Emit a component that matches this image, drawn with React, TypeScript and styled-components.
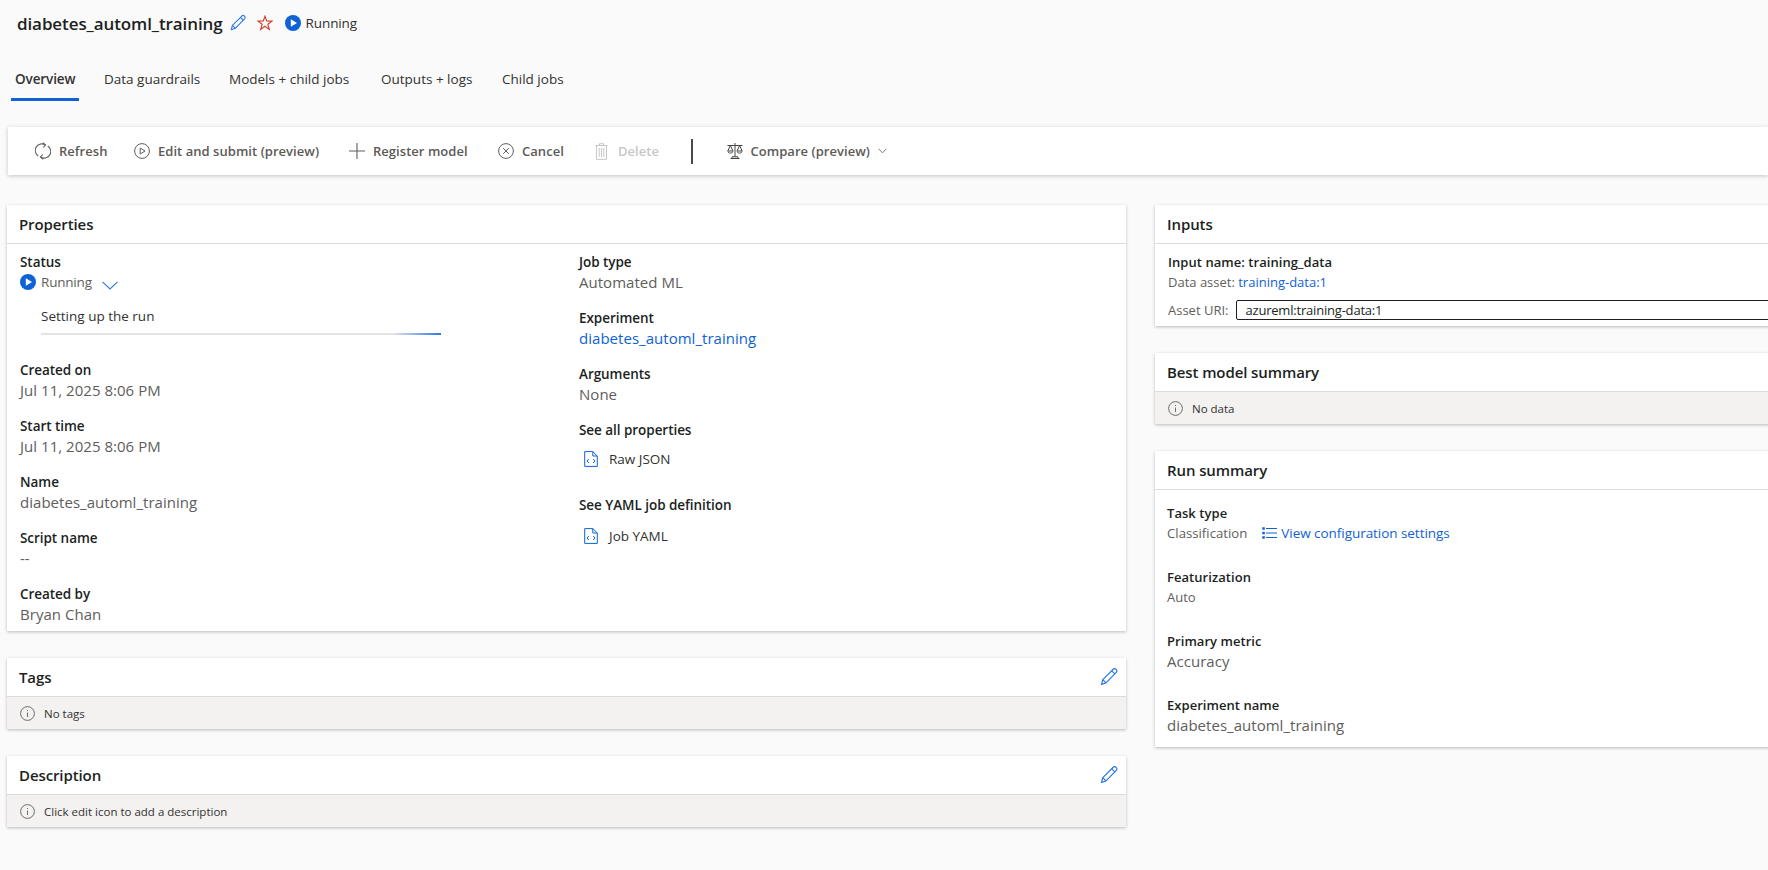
import React from "react";
import styled, { createGlobalStyle } from "styled-components";

const Global = createGlobalStyle`
  html, body { margin: 0; padding: 0; background: #fafafa; }
  body { font-family: "Open Sans", "Noto Sans", "Liberation Sans", sans-serif; }
  * { box-sizing: border-box; }
`;

const Page = styled.div`
  width: 1768px;
  height: 870px;
  overflow: hidden;
  background: #fafafa;
  color: #201f1e;
`;
const TitleRow = styled.header`
  display: flex;
  align-items: center;
  height: 46px;
  padding-left: 17px;
`;
const Title = styled.h1`
  margin: 0 6px 0 0;
  font-size: 17px;
  font-weight: 600;
  letter-spacing: -0.1px;
  color: #201f1e;
`;
const Spaced = styled.span<{ $ml?: number }>`
  display: inline-flex;
  margin-left: ${(p) => p.$ml ?? 0}px;
`;
const StatusText = styled.span`
  font-size: 13.5px;
  letter-spacing: -0.1px;
  margin-left: 5px;
  color: #323130;
`;
const Tabs = styled.nav`
  display: flex;
  margin-top: 20px;
  height: 36px;
  padding-left: 11px;
`;
const Tab = styled.div<{ $active?: boolean; $w: number }>`
  width: ${(p) => p.$w}px;
  font-size: 13.5px;
  font-weight: ${(p) => (p.$active ? 600 : 400)};
  letter-spacing: ${(p) => (p.$active ? "-0.1px" : "0")};
  white-space: nowrap;
  color: #323130;
  padding: 4px 0 0 4px;
  height: 35px;
  border-bottom: 3px solid ${(p) => (p.$active ? "#0f62d6" : "transparent")};
`;
const TabGap = styled.div<{ $w: number }>`
  width: ${(p) => p.$w}px;
`;
const Toolbar = styled.div`
  display: flex;
  align-items: center;
  margin: 25px 0 0 8px;
  height: 48px;
  background: #fff;
  box-shadow: 0 1px 4px rgba(0, 0, 0, 0.22);
  padding-left: 27px;
`;
const ToolButton = styled.div<{ $disabled?: boolean; $w: number }>`
  display: flex;
  align-items: center;
  gap: ${(p) => (p.$disabled ? 10 : 8)}px;
  width: ${(p) => p.$w}px;
  font-size: 13px;
  font-weight: 600;
  letter-spacing: 0.04px;
  white-space: nowrap;
  color: ${(p) => (p.$disabled ? "#c8c6c4" : "#5c5a58")};
`;
const Divider = styled.div`
  width: 1.5px;
  height: 25px;
  background: #4a4a4a;
  margin-right: 34px;
`;
const Columns = styled.main`
  display: grid;
  grid-template-columns: 1119px 740px;
  column-gap: 29px;
  margin: 30px 0 0 7px;
`;
const Column = styled.div`
  display: flex;
  flex-direction: column;
  gap: 27px;
`;
const Card = styled.section`
  background: #fff;
  box-shadow: 0 1px 3px rgba(0, 0, 0, 0.25);
`;
const CardHeader = styled.div`
  display: flex;
  align-items: center;
  justify-content: space-between;
  height: 39px;
  padding: 0 7px 0 12px;
  border-bottom: 1.5px solid #dcdbda;
  font-size: 15px;
  font-weight: 600;
  letter-spacing: -0.1px;
`;
const InfoRow = styled.div`
  display: flex;
  align-items: center;
  gap: 9px;
  height: 32px;
  padding-left: 13px;
  background: #f3f2f1;
  font-size: 11.5px;
  color: #323130;
`;
const PropertiesBody = styled.div`
  display: grid;
  grid-template-columns: 559px 1fr;
  padding: 8px 13px 0;
  height: 387px;
`;
const Field = styled.div<{ $h?: number }>`
  height: ${(p) => p.$h ?? 56}px;
`;
const Label = styled.div`
  font-size: 13.5px;
  line-height: 20px;
  font-weight: 600;
  letter-spacing: -0.05px;
  white-space: nowrap;
  color: #201f1e;
`;
const SideLabel = styled(Label)`
  font-size: 13px;
  letter-spacing: 0.05px;
`;
const Value = styled.div`
  font-size: 15px;
  line-height: 20px;
  letter-spacing: 0.03px;
  color: #605e5c;
`;
const LinkValue = styled(Value)`
  color: #0f62d6;
`;
const StatusLine = styled.div`
  display: flex;
  align-items: center;
  height: 20px;
  font-size: 13.5px;
  color: #605e5c;
  letter-spacing: -0.2px;
`;
const Chevron = styled.svg`
  margin-left: 10px;
  margin-top: 6px;
`;
const StepText = styled.div`
  margin: 15px 0 0 21px;
  font-size: 13.5px;
  line-height: 18px;
  color: #323130;
`;
const Progress = styled.div`
  margin: 8px 0 0 21px;
  width: 400px;
  height: 2px;
  background: linear-gradient(90deg, #e4e4e6 0, #e4e4e6 88%, #2b78e4 100%);
`;
const StatusBlock = styled.div`
  height: 98px;
`;
const FileRow = styled.div<{ $mt: number }>`
  display: flex;
  align-items: center;
  gap: 11px;
  margin: ${(p) => p.$mt}px 0 0 5px;
  font-size: 13.5px;
  color: #323130;
`;
const InputsBody = styled.div`
  padding: 8px 12px 0 13px;
  height: 82px;
`;
const SmallValue = styled.div`
  font-size: 13px;
  line-height: 20px;
  color: #605e5c;
`;
const InlineLink = styled.span`
  color: #0f62d6;
`;
const UriRow = styled.div`
  display: flex;
  align-items: center;
  gap: 8px;
  margin-top: 8px;
  font-size: 13px;
  color: #605e5c;
`;
const UriBox = styled.div`
  width: 600px;
  height: 20px;
  border: 1px solid #201f1e;
  border-radius: 2px 0 0 2px;
  padding-left: 8px;
  font-size: 13px;
  letter-spacing: -0.2px;
  line-height: 19px;
  color: #201f1e;
`;
const RunBody = styled.div`
  padding: 13px 12px 0;
  height: 257px;
`;
const RunField = styled.div`
  height: 64px;
`;
const TaskLine = styled.div`
  display: flex;
  align-items: center;
  font-size: 13.2px;
  line-height: 20px;
  color: #605e5c;
`;
const ConfigLink = styled.span`
  display: inline-flex;
  align-items: center;
  gap: 4px;
  margin-left: 15px;
  font-size: 13.5px;
  letter-spacing: -0.05px;
  color: #0f62d6;
`;

const PencilIcon = ({ size = 20 }: { size?: number }) => (
  <svg width={size} height={size} viewBox="0 0 20 20" fill="none" stroke="#2b78e4" strokeWidth="1.2" strokeLinejoin="round">
    <path d="M2.5 17.5 L3.8 12.6 L14.2 2.3 C15 1.5 16.3 1.5 17.2 2.4 C18.1 3.3 18.1 4.6 17.3 5.4 L7 15.9 Z" />
    <path d="M12.7 3.8 L15.8 6.9 M3.8 12.6 L7 15.9" />
  </svg>
);
const StarIcon = () => (
  <svg width="16" height="16" viewBox="0 0 16 16" fill="none" stroke="#d13b2a" strokeWidth="1.1" strokeLinejoin="miter">
    <path d="M8 1.2 L9.7 6 L14.9 6.1 L10.8 9.2 L12.3 14.4 L8 11.3 L3.7 14.4 L5.2 9.2 L1.1 6.1 L6.3 6 Z" />
  </svg>
);
const PlayCircle = ({ size = 16 }: { size?: number }) => (
  <svg width={size} height={size} viewBox="0 0 16 16">
    <circle cx="8" cy="8" r="8" fill="#0f62d6" />
    <path d="M5.8 4.2 L12 8 L5.8 11.8 Z" fill="#fff" />
  </svg>
);
const RefreshIcon = () => (
  <svg width="16" height="18" viewBox="0 0 16 18" fill="none" stroke="#605e5c" strokeWidth="1.1">
    <path d="M10.5 3 A6.6 6.6 0 0 0 3.2 14" />
    <path d="M5.5 15 A6.6 6.6 0 0 0 12.8 4" />
    <path d="M7.8 0.8 L10.5 3 L8.2 5.5" />
    <path d="M8.2 17.2 L5.5 15 L7.8 12.5" />
  </svg>
);
const PlayOutline = () => (
  <svg width="16" height="16" viewBox="0 0 16 16" fill="none" stroke="#605e5c" strokeWidth="1">
    <circle cx="8" cy="8" r="7.4" />
    <path d="M6.2 5 L11 8 L6.2 11 Z" />
  </svg>
);
const PlusIcon = () => (
  <svg width="16" height="16" viewBox="0 0 16 16" fill="none" stroke="#605e5c" strokeWidth="1.1">
    <path d="M0 8 H16 M8 0 V16" />
  </svg>
);
const CancelIcon = () => (
  <svg width="16" height="16" viewBox="0 0 16 16" fill="none" stroke="#605e5c" strokeWidth="1">
    <circle cx="8" cy="8" r="7.4" />
    <path d="M5.2 5.2 L10.8 10.8 M10.8 5.2 L5.2 10.8" />
  </svg>
);
const TrashIcon = () => (
  <svg width="13" height="17" viewBox="0 0 13 17" fill="none" stroke="#c8c6c4" strokeWidth="1">
    <path d="M0.5 2.5 H12.5 M4.5 2.5 V0.7 H8.5 V2.5 M1.5 2.5 V16.3 H11.5 V2.5 M4.2 5 V14 M6.5 5 V14 M8.8 5 V14" />
  </svg>
);
const ScaleIcon = () => (
  <svg width="16" height="16" viewBox="0 0 16 16" fill="none" stroke="#484644" strokeWidth="1">
    <path d="M0.5 2.5 H15.5 M8 0 V14 M3.5 15.5 H12.5" />
    <path d="M3.4 2.5 L0.8 8 H6 Z M12.6 2.5 L10 8 H15.2 Z" />
    <path d="M0.8 8.5 C1.4 10.6 5.4 10.6 6 8.5 M10 8.5 C10.6 10.6 14.6 10.6 15.2 8.5" />
    <path d="M5 13.8 H11 V15.5 H5 Z" />
  </svg>
);
const SmallChevron = () => (
  <svg width="9" height="6" viewBox="0 0 9 6" fill="none" stroke="#797775" strokeWidth="1">
    <path d="M0.5 0.8 L4.5 4.8 L8.5 0.8" />
  </svg>
);
const FileCodeIcon = () => (
  <svg width="14" height="16" viewBox="0 0 14 16" fill="none" stroke="#0f62d6" strokeWidth="1">
    <path d="M0.7 0.6 H8.8 L13.3 5 V15.4 H0.7 Z M8.8 0.6 V5 H13.3" />
    <path d="M4.8 8 L3 10 L4.8 12 M9.2 8 L11 10 L9.2 12" />
  </svg>
);
const InfoIcon = () => (
  <svg width="15" height="15" viewBox="0 0 15 15" fill="none" stroke="#605e5c" strokeWidth="0.9">
    <circle cx="7.5" cy="7.5" r="6.9" />
    <path d="M7.5 6.5 V11 M7.5 4 V5" />
  </svg>
);
const ListIcon = () => (
  <svg width="15" height="12" viewBox="0 0 15 12" fill="none" stroke="#0f62d6">
    <path strokeWidth="1" d="M4 1.5 H15 M4 6 H15 M4 10.5 H15" />
    <path strokeWidth="2.4" d="M0.3 1.5 H2.8 M0.3 6 H2.8 M0.3 10.5 H2.8" />
  </svg>
);

const left = [
  ["Created on", "Jul 11, 2025 8:06 PM"],
  ["Start time", "Jul 11, 2025 8:06 PM"],
  ["Name", "diabetes_automl_training"],
  ["Script name", "--"],
  ["Created by", "Bryan Chan"],
];

export default function App() {
  return (
    <Page>
      <Global />
      <TitleRow>
        <Title>diabetes_automl_training</Title>
        <PencilIcon size={18} />
        <Spaced $ml={10}>
          <StarIcon />
        </Spaced>
        <Spaced $ml={12}>
          <PlayCircle />
        </Spaced>
        <StatusText>Running</StatusText>
      </TitleRow>
      <Tabs>
        <Tab $active $w={68}>Overview</Tab>
        <TabGap $w={21} />
        <Tab $w={125}>Data guardrails</Tab>
        <Tab $w={152}>Models + child jobs</Tab>
        <Tab $w={121}>Outputs + logs</Tab>
        <Tab $w={80}>Child jobs</Tab>
      </Tabs>
      <Toolbar>
        <ToolButton $w={99}><RefreshIcon />Refresh</ToolButton>
        <ToolButton $w={215}><PlayOutline />Edit and submit (preview)</ToolButton>
        <ToolButton $w={149}><PlusIcon />Register model</ToolButton>
        <ToolButton $w={97}><CancelIcon />Cancel</ToolButton>
        <ToolButton $disabled $w={96}><TrashIcon />Delete</ToolButton>
        <Divider />
        <ToolButton $w={180}>
          <ScaleIcon />
          Compare (preview)
          <SmallChevron />
        </ToolButton>
      </Toolbar>
      <Columns>
        <Column>
          <Card>
            <CardHeader>Properties</CardHeader>
            <PropertiesBody>
              <div>
                <StatusBlock>
                  <Label>Status</Label>
                  <StatusLine>
                    <PlayCircle />
                    <Spaced $ml={5}>Running</Spaced>
                    <Chevron width="16" height="9" viewBox="0 0 16 9" fill="none" stroke="#2b78e4" strokeWidth="1.1">
                      <path d="M0.5 0.8 L8 8 L15.5 0.8" />
                    </Chevron>
                  </StatusLine>
                  <StepText>Setting up the run</StepText>
                  <Progress />
                </StatusBlock>
                <Field $h={10} />
                {left.map(([k, v]) => (
                  <Field key={k}>
                    <Label>{k}</Label>
                    <Value>{v}</Value>
                  </Field>
                ))}
              </div>
              <div>
                <Field>
                  <Label>Job type</Label>
                  <Value>Automated ML</Value>
                </Field>
                <Field>
                  <Label>Experiment</Label>
                  <LinkValue>diabetes_automl_training</LinkValue>
                </Field>
                <Field>
                  <Label>Arguments</Label>
                  <Value>None</Value>
                </Field>
                <Field $h={75}>
                  <Label>See all properties</Label>
                  <FileRow $mt={10}><FileCodeIcon />Raw JSON</FileRow>
                </Field>
                <Field>
                  <Label>See YAML job definition</Label>
                  <FileRow $mt={12}><FileCodeIcon />Job YAML</FileRow>
                </Field>
              </div>
            </PropertiesBody>
          </Card>
          <Card>
            <CardHeader>Tags<PencilIcon /></CardHeader>
            <InfoRow><InfoIcon />No tags</InfoRow>
          </Card>
          <Card>
            <CardHeader>Description<PencilIcon /></CardHeader>
            <InfoRow><InfoIcon />Click edit icon to add a description</InfoRow>
          </Card>
        </Column>
        <Column>
          <Card>
            <CardHeader>Inputs</CardHeader>
            <InputsBody>
              <SideLabel>Input name: training_data</SideLabel>
              <SmallValue>Data asset: <InlineLink>training-data:1</InlineLink></SmallValue>
              <UriRow>Asset URI:<UriBox>azureml:training-data:1</UriBox></UriRow>
            </InputsBody>
          </Card>
          <Card>
            <CardHeader>Best model summary</CardHeader>
            <InfoRow><InfoIcon />No data</InfoRow>
          </Card>
          <Card>
            <CardHeader>Run summary</CardHeader>
            <RunBody>
              <RunField>
                <SideLabel>Task type</SideLabel>
                <TaskLine>
                  Classification
                  <ConfigLink><ListIcon />View configuration settings</ConfigLink>
                </TaskLine>
              </RunField>
              <RunField>
                <SideLabel>Featurization</SideLabel>
                <SmallValue>Auto</SmallValue>
              </RunField>
              <RunField>
                <SideLabel>Primary metric</SideLabel>
                <Value>Accuracy</Value>
              </RunField>
              <RunField>
                <SideLabel>Experiment name</SideLabel>
                <Value>diabetes_automl_training</Value>
              </RunField>
            </RunBody>
          </Card>
        </Column>
      </Columns>
    </Page>
  );
}
